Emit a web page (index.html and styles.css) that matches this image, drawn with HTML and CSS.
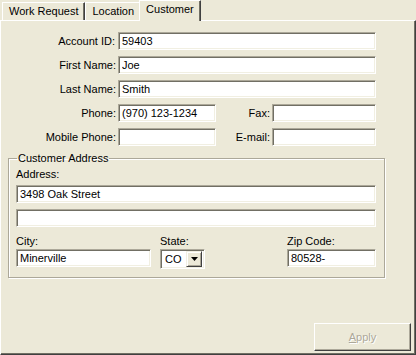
FILE: index.html
```html
<!DOCTYPE html>
<html lang="en">
<head>
    <meta charset="UTF-8">
    <title>Customer</title>
    <link rel="stylesheet" href="styles.css">
</head>
<body>
    <div class="tabs">
        <div class="tab">Work Request</div>
        <div class="tab">Location</div>
        <div class="tab active">Customer</div>
    </div>

    <div class="panel">
        <div class="fields">
            <label class="lbl">Account ID:</label>
            <input class="box wide" type="text" value="59403">

            <label class="lbl">First Name:</label>
            <input class="box wide" type="text" value="Joe">

            <label class="lbl">Last Name:</label>
            <input class="box wide" type="text" value="Smith">

            <label class="lbl">Phone:</label>
            <input class="box" type="text" value="(970) 123-1234">
            <label class="lbl">Fax:</label>
            <input class="box" type="text" value="">

            <label class="lbl">Mobile Phone:</label>
            <input class="box" type="text" value="">
            <label class="lbl">E-mail:</label>
            <input class="box" type="text" value="">
        </div>

        <fieldset class="group">
            <legend>Customer Address</legend>
            <div class="cap">Address:</div>
            <input class="box full" type="text" value="3498 Oak Street">
            <input class="box full second" type="text" value="">

            <div class="city-row">
                <div class="col">
                    <div class="cap">City:</div>
                    <input class="box city" type="text" value="Minerville">
                </div>
                <div class="col">
                    <div class="cap">State:</div>
                    <div class="combo">
                        <span class="combo-text">CO</span>
                        <span class="combo-btn">
                            <svg width="7" height="4" viewBox="0 0 7 4"><path d="M0 0h7L3.5 4z" fill="#000"/></svg>
                        </span>
                    </div>
                </div>
                <div class="col">
                    <div class="cap">Zip Code:</div>
                    <input class="box zip" type="text" value="80528-">
                </div>
            </div>
        </fieldset>

        <div class="actions">
            <button class="btn" disabled><u>A</u>pply</button>
        </div>
    </div>
</body>
</html>
```

FILE: styles.css
```css
html, body {
    margin: 0;
    padding: 0;
}
body {
    width: 416px;
    height: 355px;
    overflow: hidden;
    background: #ece9d8;
    font-family: "Liberation Sans", Arial, sans-serif;
    font-size: 11px;
    color: #000;
}

/* tab strip */
.tabs {
    display: flex;
    align-items: flex-end;
    height: 20px;
    padding-left: 2px;
}
.tab {
    box-sizing: border-box;
    height: 18px;
    line-height: 17px;
    padding: 0 6px 0 7px;
    border-top: 1px solid #fff;
    border-left: 1px solid #fff;
    border-right: 1px solid #404040;
    box-shadow: inset -1px 0 #716f64;
}
.tab:first-child {
    padding: 0 5px 0 6px;
}
.tab.active {
    position: relative;
    z-index: 1;
    height: 21px;
    line-height: 17px;
    margin: 0 0 -1px -2px;
    padding: 0 6px 2px 6px;
    background: #ece9d8;
}

/* page body */
.panel {
    box-sizing: border-box;
    height: 335px;
    border-top: 1px solid #fff;
    border-left: 1px solid #fff;
    border-right: 1px solid #404040;
    border-bottom: 1px solid #404040;
    box-shadow: inset -1px -1px #716f64;
    padding-top: 11px;
    display: flex;
    flex-direction: column;
}

.fields {
    display: grid;
    grid-template-columns: 117px 98px 56px 104px;
    grid-auto-rows: 18px;
    row-gap: 6px;
    align-items: center;
}
.lbl {
    text-align: right;
    padding-right: 3px;
    white-space: nowrap;
}
.lbl + .box + .lbl {
    padding-right: 2px;
}
.wide {
    grid-column: 2 / 5;
}

.box {
    box-sizing: border-box;
    height: 18px;
    margin: 0;
    padding: 0 3px;
    font: inherit;
    color: #000;
    background: #fff;
    border-style: solid;
    border-width: 1px;
    border-color: #aca899 #fff #fff #aca899;
    box-shadow: inset 1px 1px #716f64, inset -1px -1px #f1efe2;
    outline: none;
}

/* address group */
.group {
    box-sizing: border-box;
    width: 377px;
    margin: 6px 0 0 7px;
    padding: 3px 8px 8px 7px;
    border: 1px solid #aca899;
    box-shadow: 1px 1px #fff, inset 1px 1px #fff;
}
.group legend {
    padding: 0 1px;
    margin-left: 1px;
    line-height: 13px;
}
.cap {
    line-height: 13px;
    margin-bottom: 4px;
}
.full {
    display: block;
    width: 360px;
}
.second {
    margin-top: 6px;
}
.city-row {
    display: flex;
    margin-top: 8px;
}
.col .cap {
    margin-bottom: 1px;
}
.city {
    width: 135px;
    margin-right: 9px;
}
.zip {
    width: 89px;
}
.col:nth-child(2) {
    width: 127px;
}

.combo {
    box-sizing: border-box;
    display: flex;
    align-items: center;
    width: 45px;
    height: 20px;
    background: #fff;
    border-style: solid;
    border-width: 1px;
    border-color: #aca899 #fff #fff #aca899;
    box-shadow: inset 1px 1px #716f64, inset -1px -1px #f1efe2;
    padding: 2px;
}
.combo-text {
    flex: 1;
    padding-left: 2px;
}
.combo-btn {
    box-sizing: border-box;
    width: 16px;
    height: 16px;
    display: flex;
    align-items: center;
    justify-content: center;
    background: #ece9d8;
    border-style: solid;
    border-width: 1px;
    border-color: #f1efe2 #404040 #404040 #f1efe2;
    box-shadow: inset 1px 1px #fff, inset -1px -1px #aca899;
}

/* bottom button */
.actions {
    margin-top: auto;
    display: flex;
    justify-content: flex-end;
    padding: 0 4px 3px 0;
}
.btn {
    box-sizing: border-box;
    width: 97px;
    height: 28px;
    font: inherit;
    color: #aca899;
    text-shadow: 1px 1px #fff;
    background: #ece9d8;
    border-style: solid;
    border-width: 1px;
    border-color: #fff #404040 #404040 #fff;
    box-shadow: inset -1px -1px #aca899;
    padding: 0;
}
```
